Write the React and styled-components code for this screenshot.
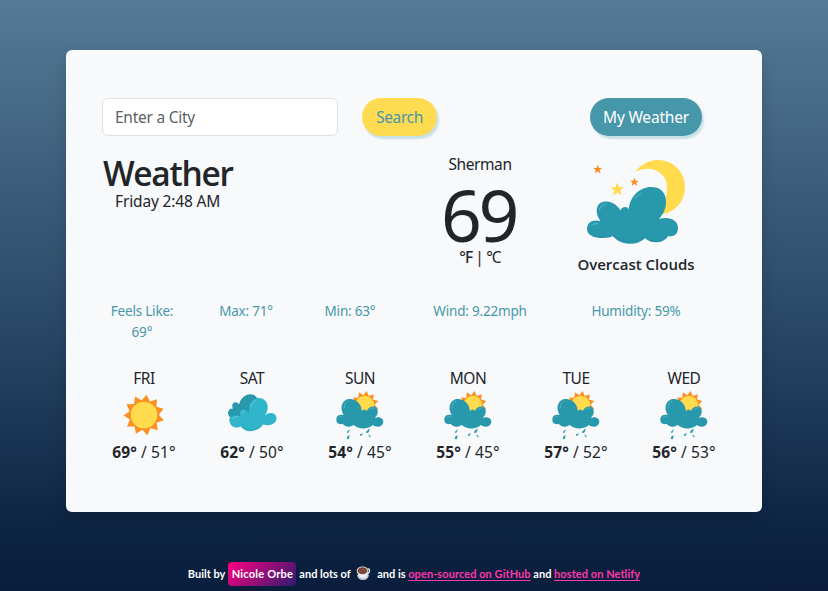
import React from "react";
import styled, { createGlobalStyle } from "styled-components";

const Global = createGlobalStyle`
  *, *::before, *::after { box-sizing: border-box; }
  body {
    margin: 0;
    height: 591px;
    overflow: hidden;
    color: #212529;
    font: 400 15.500px/24px "Noto Sans", "Open Sans", sans-serif;
    background: linear-gradient(#557a95 0%, #2b4a68 53%, #0b2341 91%, #0a1d3c 100%);
  }
  h1, h2, p { margin: 0; font-weight: inherit; }
`;

const Page = styled.div`
  display: flex;
  flex-direction: column;
  align-items: center;
  height: 591px;
  padding-top: 50px;
`;
const Card = styled.main`
  width: 696px;
  height: 462px;
  padding: 48px 24px;
  background: #f8f9fb;
  border-radius: 6px;
  box-shadow: 0 8px 16px rgba(0, 0, 0, 0.15);
`;
const Text = styled.span`
  display: inline-block;
  white-space: nowrap;
  font-size: ${(p) => p.$size || 15.5}px;
  font-weight: ${(p) => p.$weight || 400};
  letter-spacing: ${(p) => p.$track || 0}px;
`;
const Summary = styled(Text)`
  font-family: "Open Sans", sans-serif;
  font-weight: 600;
`;
const SearchBar = styled.form`
  display: flex;
  height: 38px;
  padding-left: 12px;
`;
const Input = styled.input`
  width: 236px;
  height: 38px;
  margin-right: 24px;
  padding: 0 12px;
  border: 1px solid #dee2e6;
  border-radius: 6px;
  background: #fff;
  font: 400 15.500px "Noto Sans", sans-serif;
  letter-spacing: -0.25px;
  &::placeholder { color: #5b6167; opacity: 1; }
`;
const Button = styled.button`
  width: ${(p) => p.$width}px;
  height: 38px;
  padding: 0;
  border: 0;
  border-radius: 19px;
  font: inherit;
  color: ${(p) => (p.$primary ? "#fff" : "#4797aa")};
  background: ${(p) => (p.$primary ? "#4797aa" : "#ffdb52")};
  box-shadow: 2px 3px 2px #c7dfe6;
  margin-left: ${(p) => (p.$primary ? 153 : 0)}px;
`;
const Current = styled.section`
  display: grid;
  grid-template-columns: 312px 156px 156px;
  height: 151px;
  padding-top: 16px;
`;
const Place = styled.div`
  display: flex;
  flex-direction: column;
  padding-left: 13px;
`;
const Title = styled.h1`
  font: 600 33.500px/42px "Open Sans", sans-serif;
  height: 37px;
  letter-spacing: -1.3px;
`;
const When = styled.p`
  padding-left: 12px;
`;
const Centered = styled.div`
  display: flex;
  flex-direction: column;
  align-items: center;
`;
const Degrees = styled.p`
  height: 69px;
  padding-right: 3px;
  font-size: 71.500px;
  line-height: 78px;
  letter-spacing: -3.500px;
`;
const Art = styled.svg`
  display: block;
  flex-shrink: 0;
  width: ${(p) => p.$w}px;
  height: ${(p) => p.$h}px;
  overflow: visible;
`;
const NightArt = styled(Art)`
  margin: -2px 2px 2px 0;
`;
const Stats = styled.section`
  display: grid;
  grid-template-columns: 104px 104px 104px 156px 156px;
  height: 79px;
  padding-top: 14px;
  text-align: center;
  color: #4797aa;
  line-height: 21px;
`;
const Stat = styled.div`
  display: flex;
  flex-direction: column;
  align-items: center;
`;
const Forecast = styled.section`
  display: grid;
  grid-template-columns: repeat(6, 108px);
`;
const Footer = styled.footer`
  display: flex;
  align-items: center;
  height: 24px;
  margin-top: 50px;
  color: #fff;
  font: 700 11px/24px Lato, sans-serif;
  white-space: pre;
`;
const Author = styled.span`
  width: 68px;
  height: 24px;
  margin: 0 3px;
  text-align: center;
  letter-spacing: 0.2px;
  border-radius: 4px;
  background: linear-gradient(135deg, #ff0080, #301a70);
`;
const Link = styled.a`
  color: #ff36ac;
  letter-spacing: 0.07px;
  text-decoration: underline;
  text-underline-offset: 2px;
`;

const STAR = "M0-7 1.8-2.3 7-2.2 2.9 1 4.3 6 0 3.1-4.3 6-2.9 1-7-2.2-1.8-2.3Z";

function NightClouds() {
  return (
    <NightArt $w={110} $h={100} viewBox="0 0 110 100">
      <path fill="#ffdb4d" d="M55 22C61 14 70 10 78 10C93 10 105 22 105 37C105 51 95 63 82 64C86 53 87 43 87 36C86 21 70 14 55 22Z" />
      <path fill="#f78b22" transform="translate(17.7 19.4) scale(.65)" d={STAR} />
      <path fill="#ffdb4d" transform="translate(37.3 39.5)" d={STAR} />
      <path fill="#f78b22" transform="translate(54.4 32.2) scale(.62)" d={STAR} />
      <path fill="#2899ac" d="M20.500 71C14 62 16 51.500 26 51.500C33 51.500 38 56 40.500 60.500C42 56 48 56 49 59.500C49 47 60 37 71 37C81 37 86 43 86 52C86 60 83 64 79 69C89 66 98 70 98 78C98 85 93 87 88 86C84 94 70 94 65 88C57 97 39 95 33 86C28 89 7 90 7 79C7 72 13 69 20.500 71Z" />
      <path fill="none" stroke="#56bdd0" strokeWidth="1" strokeLinecap="round" d="M19.500 60Q20 55 25.500 54M12 75Q14 73 18 73.700M55.500 48Q57 45 61 43.500" />
      <path fill="none" stroke="#278da0" strokeWidth="1" d="M33 86Q49 97 65 87M66 88Q77 96 87 86M13 86Q24 88 31 86" />
    </NightArt>
  );
}

const rays = (cx, cy, outer, inner, count, turn = 0) =>
  Array.from({ length: count * 2 }, (_, i) => {
    const a = (i * Math.PI) / count + turn;
    const r = i % 2 ? inner : outer;
    return `${(cx + Math.sin(a) * r).toFixed(2)},${(cy - Math.cos(a) * r).toFixed(2)}`;
  }).join(" ");

function Sun() {
  return (
    <>
      <polygon fill="#fa9021" points={rays(25, 25, 20.5, 14.8, 11, 0.12)} />
      <circle cx="25" cy="25" r="13.3" fill="#ffdb4d" />
    </>
  );
}

function Clouds() {
  return (
    <g transform="translate(1 .5)">
      <path fill="#2899ac" d="M4 28C-2 25-1 18 5 18C2 13 8 9 11 14C14 2 27 1 30 9L32 30Z" />
      <path fill="#30b5cb" d="M2 32C-1 27 5 23 13 26C9 20 16 16 21 22C20 9 29 6 34 8C41 11 41 19 37 25C42 20 49 23 48.500 28C48 34 41 36 35 34C30 42 17 43 13 36C9 38 3 37 2 32Z" />
      <path fill="none" stroke="#65cde1" strokeWidth=".8" strokeLinecap="round" d="M22.500 16Q24 11 28 10M14 24Q14 21 16 20M4 28Q7 26 10 26" />
      <path fill="none" stroke="#27a4b8" strokeWidth=".7" d="M14 36Q24 43 33 36" />
    </g>
  );
}

function SunRain() {
  return (
    <g transform="translate(.8 1)">
      <polygon fill="#fa9021" points={rays(29, 14, 14, 9.8, 11, 0.13)} />
      <circle cx="29" cy="14" r="9.3" fill="#ffdb4d" />
      <path fill="#2899ac" d="M8 24C3 16 7 8 14 8C21 8 26 14 26 20Q29 17 31 20C34 14 42 14 42 21Q42 24 39 27C44 25 48 28 47.500 31C47 36 41 37 37 34C33 38 23 39 18 34C13 37 10 36 7 33C1 34 0 30 .7 27C1 24 5 23 8 24Z" />
      <path fill="none" stroke="#61bdce" strokeWidth=".6" strokeLinecap="round" d="M8.500 17Q8 12 12 10M3 27Q4 25 7 25.500M35 18Q37 16 39 17" />
      <g fill="#2899ac">
        <path d="m14 38-3 3q1 2 2 0Z" />
        <path d="m14 44-3 2q0 3 2 2Z" />
        <path d="m34 37-4 4q1 2 3 0Z" />
        <path d="m27 42-3 1.500q0 2 2 1Z" />
        <path d="m32.500 43 1 3q2 1 1-1Z" />
      </g>
    </g>
  );
}

function Coffee() {
  return (
    <Art $w={16} $h={16} viewBox="0 0 16 16">
      <path fill="#c9cdd0" d="M1 9Q2 14 7 14Q12 14 13 9Z" />
      <path fill="none" stroke="#eff2f4" strokeWidth="1.3" d="M11 4Q14 1.500 13.500 5Q13 8 10 9" />
      <path fill="#eceff1" d="M1 5Q2 12 7 12Q12 12 12 4Z" />
      <ellipse cx="6.500" cy="4.700" rx="5.800" ry="4.100" fill="#e7e9ea" />
      <ellipse cx="6.500" cy="4.800" rx="4.900" ry="3.500" fill="#78483a" />
    </Art>
  );
}

const days = [
  ["FRI", "69°", "51°", Sun],
  ["SAT", "62°", "50°", Clouds],
  ["SUN", "54°", "45°", SunRain],
  ["MON", "55°", "45°", SunRain],
  ["TUE", "57°", "52°", SunRain],
  ["WED", "56°", "53°", SunRain],
];
const stats = ["Max: 71°", "Min: 63°", "Wind: 9.22mph", "Humidity: 59%"];

export default function App() {
  return (
    <>
      <Global />
      <Page>
        <Card>
          <SearchBar>
            <Input placeholder="Enter a City" />
            <Button type="button" $width={75}><Text $track={-0.4}>Search</Text></Button>
            <Button type="button" $width={112} $primary><Text $track={-0.2}>My Weather</Text></Button>
          </SearchBar>
          <Current>
            <Place>
              <Title>Weather</Title>
              <When><Text $track={-0.15}>Friday 2:48 AM</Text></When>
            </Place>
            <Centered>
              <Text $track={-0.4}>Sherman</Text>
              <Degrees>69</Degrees>
              <Text $track={-0.9}><Text $weight={500} $track={-0.9}>°F</Text> | °C</Text>
            </Centered>
            <Centered>
              <NightClouds />
              <Summary $size={15} $track={0}>Overcast Clouds</Summary>
            </Centered>
          </Current>
          <Stats>
            <Stat><Text $size={13.5} $track={-0.2}>Feels Like:</Text><Text $size={13.5}>69°</Text></Stat>
            {stats.map((s) => <Stat key={s}><Text $size={13.5} $track={-0.2}>{s}</Text></Stat>)}
          </Stats>
          <Forecast>
            {days.map(([day, high, low, Icon]) => (
              <Centered key={day}>
                <Text $track={-0.5}>{day}</Text>
                <Art $w={50} $h={50} viewBox="0 0 50 50"><Icon /></Art>
                <Text $track={0.1}><Text $weight={700} $track={0.1}>{high}</Text> / {low}</Text>
              </Centered>
            ))}
          </Forecast>
        </Card>
        <Footer>
          <span>Built by</span><Author>Nicole Orbe</Author><span>and lots of  </span><Coffee /><span>  and is </span>
          <Link>open-sourced on GitHub</Link><span> and </span><Link>hosted on Netlify</Link>
        </Footer>
      </Page>
    </>
  );
}
